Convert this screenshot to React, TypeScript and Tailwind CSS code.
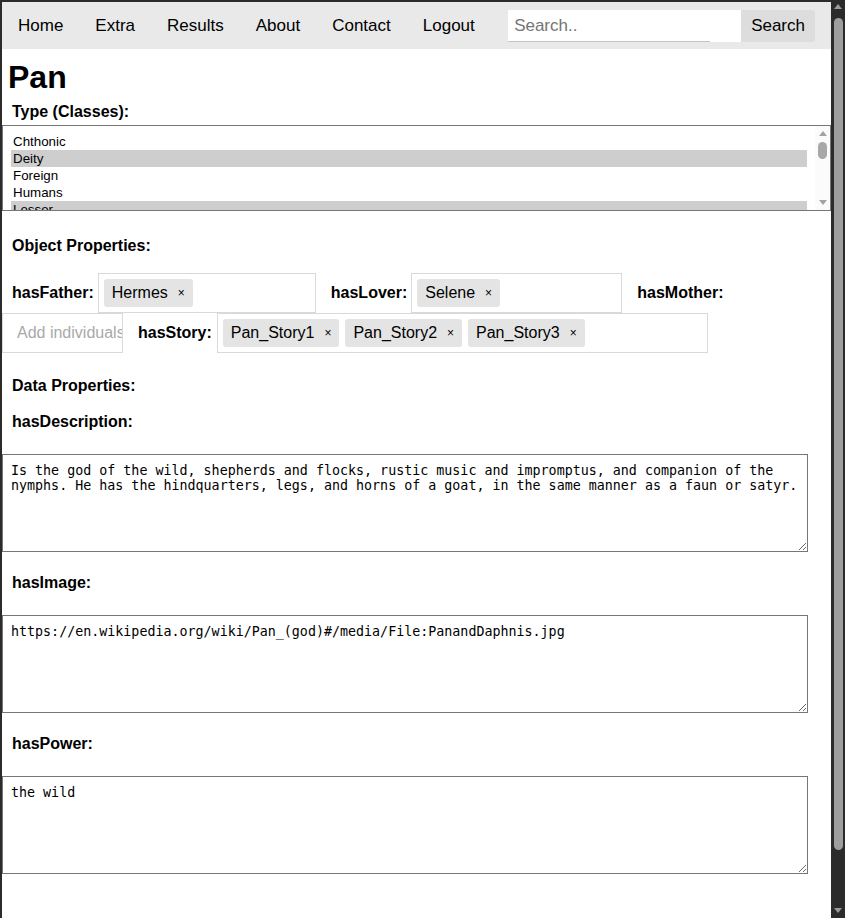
import * as React from "react";

const links = ["Home", "Extra", "Results", "About", "Contact", "Logout"];
const classes = [
  { name: "Chthonic", selected: false },
  { name: "Deity", selected: true },
  { name: "Foreign", selected: false },
  { name: "Humans", selected: false },
  { name: "Lesser", selected: true },
];

function Label({ children, className = "" }: { children: React.ReactNode; className?: string }) {
  return <div className={`pl-[10px] text-[16px] font-bold leading-[18px] ${className}`}>{children}</div>;
}

function Tag({ text }: { text: string }) {
  return (
    <span className="flex h-[28px] shrink-0 items-center rounded-[3px] bg-[#e4e4e4] pl-2 pr-2 text-[16px]">
      {text}
      <span className="ml-[10px] text-[12px]">×</span>
    </span>
  );
}

function TagBox({ tags, width, className = "" }: { tags: string[]; width: string; className?: string }) {
  return (
    <div className={`flex h-[40px] items-start gap-[6px] border border-[#d9d9d9] p-[5px] ${width} ${className}`}>
      {tags.map((t) => (
        <Tag key={t} text={t} />
      ))}
    </div>
  );
}

function Area({ value, className = "" }: { value: string; className?: string }) {
  return (
    <textarea
      readOnly
      defaultValue={value}
      className={`block h-[98px] w-[806px] border border-[#767676] bg-white py-2 pl-2 pr-[6px] font-['DejaVu_Sans_Mono',monospace] text-[13.33px] leading-[normal] text-black outline-none ${className}`}
    />
  );
}

function Triangle({ up, color }: { up?: boolean; color: string }) {
  return (
    <svg width="8" height="5" viewBox="0 0 8 5" className="block">
      <polygon points={up ? "0,5 8,5 4,0" : "0,0 8,0 4,5"} fill={color} />
    </svg>
  );
}

export default function App() {
  return (
    <div className="flex h-[918px] w-[845px] overflow-hidden bg-[#2b2b2b] font-['Liberation_Sans',Arial,sans-serif] text-black">
      <div className="w-[831px] shrink-0 pl-[2px] pt-[2px]">
        <div className="h-[916px] w-[829px] overflow-hidden bg-white">
          {/* top nav */}
          <div className="flex h-[47px] bg-[#e9e9e9]">
            {links.map((l) => (
              <a key={l} className="px-4 py-[14px] text-[17px] leading-[19px]">
                {l}
              </a>
            ))}
            <div className="ml-auto mr-4 mt-2 flex h-[32px] items-start">
              <div className="relative">
                <input
                  placeholder="Search.."
                  className="block h-[32px] w-[233px] bg-white p-[6px] text-[17px] outline-none placeholder:text-[#757575]"
                />
                <span className="absolute bottom-0 left-0 h-px w-[202px] bg-[#c4c4c4]" />
              </div>
              <button className="h-[32px] rounded-r-[3px] bg-[#dddddd] px-[10px] text-[17px]">Search</button>
            </div>
          </div>

          <h1 className="mt-[10px] px-[6px] text-[32px] font-bold leading-[37px]">Pan</h1>
          <Label className="mt-[7px]">Type (Classes):</Label>

          {/* classes list box */}
          <div className="mt-[4px] flex h-[86px] w-[829px] border border-[#767676]">
            <div className="flex-1 overflow-hidden pl-2 pr-2 pt-[7px]">
              {classes.map((c) => (
                <div
                  key={c.name}
                  className={`h-[17px] pl-[2px] text-[13.33px] leading-[17px] ${c.selected ? "bg-[#cecece]" : ""}`}
                >
                  {c.name}
                </div>
              ))}
            </div>
            <div className="flex w-[15px] flex-col items-center bg-[#fbfbfb] pt-[5px]">
              <Triangle up color="#a3a3a3" />
              <div className="mt-[6px] h-[17px] w-[9px] rounded-full bg-[#a8a8a8]" />
              <div className="mt-auto mb-[5px]">
                <Triangle color="#a3a3a3" />
              </div>
            </div>
          </div>

          <Label className="mt-[26px]">Object Properties:</Label>

          <div className="mt-[18px] flex flex-wrap items-center">
            <div className="ml-[10px] text-[16px] font-bold">hasFather:</div>
            <TagBox tags={["Hermes"]} width="w-[218px]" className="ml-[4px]" />
            <div className="ml-[15px] text-[16px] font-bold">hasLover:</div>
            <TagBox tags={["Selene"]} width="w-[211px]" className="ml-[4px]" />
            <div className="ml-[15px] text-[16px] font-bold">hasMother:</div>
            <div className="h-[40px] w-[121px] overflow-hidden border border-[#d9d9d9]">
              <input
                placeholder="Add individuals"
                className="h-full w-[160px] bg-transparent pl-[14px] text-[16px] outline-none placeholder:text-[#a9a9a9]"
              />
            </div>
            <div className="ml-[15px] text-[16px] font-bold">hasStory:</div>
            <TagBox tags={["Pan_Story1", "Pan_Story2", "Pan_Story3"]} width="w-[491px]" className="ml-[5px]" />
          </div>

          <Label className="mt-[24px]">Data Properties:</Label>
          <Label className="mt-[18px]">hasDescription:</Label>
          <Area
            className="mt-[23px]"
            value="Is the god of the wild, shepherds and flocks, rustic music and impromptus, and companion of the nymphs. He has the hindquarters, legs, and horns of a goat, in the same manner as a faun or satyr."
          />
          <Label className="mt-[22px]">hasImage:</Label>
          <Area className="mt-[23px]" value="https://en.wikipedia.org/wiki/Pan_(god)#/media/File:PanandDaphnis.jpg" />
          <Label className="mt-[22px]">hasPower:</Label>
          <Area className="mt-[23px]" value="the wild" />
        </div>
      </div>

      {/* page scrollbar */}
      <div className="flex h-[918px] w-[14px] flex-col items-center pt-[4px]">
        <Triangle up color="#9a9a9a" />
        <div className="mt-[9px] h-[832px] w-[9px] rounded-full bg-[#9e9e9e]" />
        <div className="mt-auto mb-[5px]">
          <Triangle color="#9a9a9a" />
        </div>
      </div>
    </div>
  );
}
